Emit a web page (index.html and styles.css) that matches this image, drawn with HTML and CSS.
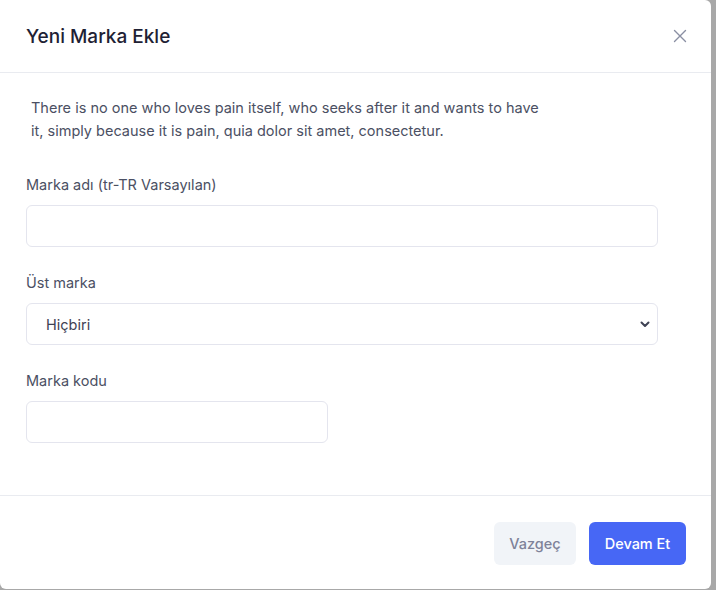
FILE: index.html
```html
<!DOCTYPE html>
<html lang="tr">
<head>
<meta charset="utf-8">
<title>Yeni Marka Ekle</title>
<link rel="stylesheet" href="styles.css">
</head>
<body>
<div class="modal">
  <div class="modal-header">
    <h2 class="modal-title">Yeni Marka Ekle</h2>
    <button class="close-btn" aria-label="Kapat">
      <svg width="14" height="14" viewBox="0 0 14 14"><path d="M1.5 1.5L12.5 12.5M12.5 1.5L1.5 12.5" stroke="#8a8fa3" stroke-width="1.4" fill="none" stroke-linecap="round"/></svg>
    </button>
  </div>
  <div class="modal-body">
    <p class="intro">There is no one who loves pain itself, who seeks after it and wants to have it, simply because it is pain, quia dolor sit amet, consectetur.</p>
    <div class="field">
      <label class="label">Marka adı (tr-TR Varsayılan)</label>
      <input class="input" type="text">
    </div>
    <div class="field">
      <label class="label">Üst marka</label>
      <div class="select">
        <span>Hiçbiri</span>
        <svg width="10" height="7" viewBox="0 0 10 7"><path d="M1.5 1.5L5 5L8.5 1.5" stroke="#3f4254" stroke-width="2" fill="none" stroke-linecap="round" stroke-linejoin="round"/></svg>
      </div>
    </div>
    <div class="field">
      <label class="label">Marka kodu</label>
      <input class="input input-short" type="text">
    </div>
  </div>
  <div class="modal-footer">
    <button class="btn btn-light">Vazgeç</button>
    <button class="btn btn-primary">Devam Et</button>
  </div>
</div>
</body>
</html>
```
FILE: styles.css
```css
* { box-sizing: border-box; }
html, body { margin: 0; padding: 0; }
body {
  background: #a8a8a8;
  font-family: Inter, "Noto Sans", sans-serif;
  width: 716px;
  height: 590px;
  overflow: hidden;
}
.modal {
  width: 711px;
  height: 589px;
  background: #fff;
  border-radius: 0 6px 6px 6px;
  display: flex;
  flex-direction: column;
}
.modal-header {
  height: 73px;
  border-bottom: 1px solid #e9ebf0;
  display: flex;
  align-items: center;
  justify-content: space-between;
  padding: 0 24px 0 26px;
}
.modal-title {
  margin: 0;
  font-size: 19px;
  font-weight: 500;
  color: #1e2134;
}
.close-btn {
  background: none;
  border: 0;
  padding: 0;
  width: 14px;
  height: 14px;
  display: flex;
}
.modal-body {
  flex: 1;
  padding: 23px 26px 0 26px;
}
.intro {
  margin: 0 0 32px 5px;
  width: 520px;
  font-size: 14.5px;
  line-height: 23px;
  color: #4b5063;
}
.field {
  display: flex;
  flex-direction: column;
  margin-bottom: 25px;
}
.label {
  font-size: 14.5px;
  line-height: 22px;
  color: #4b5063;
  margin-bottom: 9px;
}
.input, .select {
  width: 632px;
  height: 42px;
  border: 1px solid #e4e5ee;
  border-radius: 6px;
  background: #fff;
  font-family: inherit;
}
.input-short { width: 302px; }
.select {
  display: flex;
  align-items: center;
  justify-content: space-between;
  padding: 0 7px 0 19px;
  font-size: 14.5px;
  color: #3f4254;
}
.modal-footer {
  height: 94px;
  border-top: 1px solid #e9ebf0;
  display: flex;
  justify-content: flex-end;
  align-items: flex-start;
  gap: 13px;
  padding: 26px 25px 0 0;
}
.btn {
  height: 43px;
  border: 0;
  border-radius: 6px;
  font-family: inherit;
  font-size: 14.5px;
  font-weight: 500;
}
.btn-light {
  width: 82px;
  background: #f1f4f8;
  color: #7e8299;
}
.btn-primary {
  width: 97px;
  background: #4767f5;
  color: #fff;
}
```
